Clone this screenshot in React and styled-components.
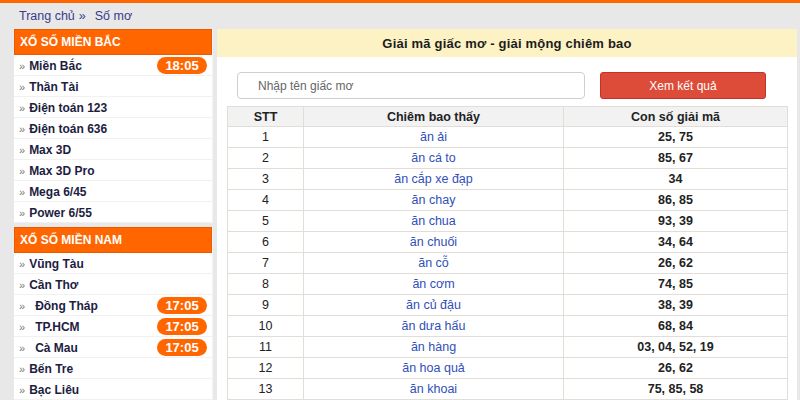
import React from 'react'
import styled, { createGlobalStyle } from 'styled-components'

const GlobalStyle = createGlobalStyle`
  body {
    margin: 0;
    background: #e8e8e8;
    font-family: "Liberation Sans", Arial, sans-serif;
  }
`

const TopBar = styled.div`
  height: 3px;
  background: #ff6600;
`

const Breadcrumb = styled.div`
  display: flex;
  align-items: center;
  height: 26px;
  padding-left: 19px;
  font-size: 12.5px;
  color: #3a3a8c;
`

const Crumb = styled.span`
  margin-right: ${p => (p.sep ? '9px' : '4px')};
`

const Layout = styled.div`
  display: grid;
  grid-template-columns: 199px 580px;
  column-gap: 4px;
  padding-left: 14px;
  align-items: start;
`

const Sidebar = styled.div`
  display: flex;
  flex-direction: column;
  gap: 4px;
`

const Box = styled.div`
  background: #fff;
  border-right: 1px solid #f4f4f4;
`

const BoxTitle = styled.div`
  height: 26px;
  display: flex;
  align-items: center;
  padding-left: 5px;
  background: #ff6600;
  border: 1px solid #ec5a00;
  box-sizing: border-box;
  color: #fff;
  font-weight: bold;
  font-size: 12px;
`

const Item = styled.div`
  height: 21px;
  display: flex;
  align-items: center;
  padding: 1px 5px 0 5px;
  border-bottom: 1px solid #f1f1f1;
  box-sizing: border-box;
  font-size: 12px;
  font-weight: bold;
  color: #1d1d3f;
`

const Arrow = styled.span`
  color: #777;
  font-weight: normal;
  font-size: 11px;
  margin-right: ${p => (p.wide ? '10px' : '4px')};
`

const Name = styled.span`
  flex: 1;
`

const Badge = styled.span`
  background: #ff6600;
  color: #fff;
  font-weight: bold;
  font-size: 13px;
  border-radius: 9px;
  width: 50px;
  height: 17px;
  display: flex;
  align-items: center;
  justify-content: center;
`

const Main = styled.div`
  background: #fff;
  padding-bottom: 20px;
`

const MainTitle = styled.div`
  height: 28px;
  display: flex;
  align-items: center;
  justify-content: center;
  background: #fdf2c4;
  font-size: 13px;
  font-weight: bold;
  color: #1c1c1c;
  letter-spacing: 0.2px;
`

const SearchRow = styled.div`
  display: flex;
  gap: 15px;
  padding: 15px 0 0 20px;
  margin-bottom: 7px;
`

const Input = styled.input`
  width: 348px;
  height: 27px;
  box-sizing: border-box;
  border: 1px solid #cfcfcf;
  border-radius: 4px;
  padding: 0 20px;
  font-family: inherit;
  font-size: 12px;
  color: #333;
  &::placeholder {
    color: #666;
  }
`

const Button = styled.button`
  width: 166px;
  height: 27px;
  background: #dd4b39;
  border: 1px solid #c9302c;
  border-radius: 3px;
  color: #fff;
  font-family: inherit;
  font-size: 12px;
`

const Table = styled.table`
  margin-left: 10px;
  width: 561px;
  border-collapse: collapse;
  font-size: 12.5px;
  color: #222;
  td, th {
    border: 1px solid #e2ddd6;
    text-align: center;
    height: 20px;
    padding: 0;
  }
  th {
    background: #f2f2f2;
    font-weight: bold;
    font-size: 12.5px;
    height: 19px;
  }
`

const Dream = styled.td`
  color: #3050b8;
`

const Nums = styled.td`
  font-weight: bold;
`

const north = ['Miền Bắc', 'Thần Tài', 'Điện toán 123', 'Điện toán 636', 'Max 3D', 'Max 3D Pro', 'Mega 6/45', 'Power 6/55']

const south = [
  { name: 'Vũng Tàu' },
  { name: 'Cần Thơ' },
  { name: 'Đồng Tháp', time: '17:05', wide: true },
  { name: 'TP.HCM', time: '17:05', wide: true },
  { name: 'Cà Mau', time: '17:05', wide: true },
  { name: 'Bến Tre' },
  { name: 'Bạc Liêu' },
]

const rows = [
  ['ăn ải', '25, 75'],
  ['ăn cá to', '85, 67'],
  ['ăn cắp xe đạp', '34'],
  ['ăn chay', '86, 85'],
  ['ăn chua', '93, 39'],
  ['ăn chuối', '34, 64'],
  ['ăn cỗ', '26, 62'],
  ['ăn cơm', '74, 85'],
  ['ăn củ đậu', '38, 39'],
  ['ăn dưa hấu', '68, 84'],
  ['ăn hàng', '03, 04, 52, 19'],
  ['ăn hoa quả', '26, 62'],
  ['ăn khoai', '75, 85, 58'],
]

const App = () => {
  return (
    <>
      <GlobalStyle />
      <TopBar />
      <Breadcrumb>
        <Crumb>Trang chủ</Crumb>
        <Crumb sep>»</Crumb>
        <Crumb>Số mơ</Crumb>
      </Breadcrumb>
      <Layout>
        <Sidebar>
          <Box>
            <BoxTitle>XỔ SỐ MIỀN BẮC</BoxTitle>
            {north.map((n, i) => (
              <Item key={n}>
                <Arrow>»</Arrow>
                <Name>{n}</Name>
                {i === 0 && <Badge>18:05</Badge>}
              </Item>
            ))}
          </Box>
          <Box>
            <BoxTitle>XỔ SỐ MIỀN NAM</BoxTitle>
            {south.map(s => (
              <Item key={s.name}>
                <Arrow wide={s.wide}>»</Arrow>
                <Name>{s.name}</Name>
                {s.time && <Badge>{s.time}</Badge>}
              </Item>
            ))}
          </Box>
        </Sidebar>
        <Main>
          <MainTitle>Giải mã giấc mơ - giải mộng chiêm bao</MainTitle>
          <SearchRow>
            <Input placeholder="Nhập tên giấc mơ" />
            <Button>Xem kết quả</Button>
          </SearchRow>
          <Table>
            <thead>
              <tr>
                <th style={{ width: 75 }}>STT</th>
                <th style={{ width: 259 }}>Chiêm bao thấy</th>
                <th>Con số giải mã</th>
              </tr>
            </thead>
            <tbody>
              {rows.map((r, i) => (
                <tr key={r[0]}>
                  <td>{i + 1}</td>
                  <Dream>{r[0]}</Dream>
                  <Nums>{r[1]}</Nums>
                </tr>
              ))}
            </tbody>
          </Table>
        </Main>
      </Layout>
    </>
  )
}

export default App
